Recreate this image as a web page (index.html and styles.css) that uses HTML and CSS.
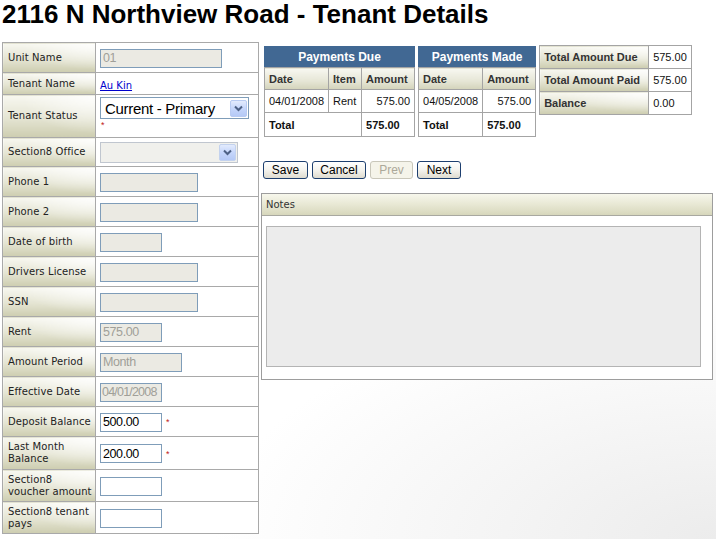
FILE: index.html
```html
<!DOCTYPE html>
<html>
<head>
<meta charset="utf-8">
<title>Tenant Details</title>
<link rel="stylesheet" href="styles.css">
</head>
<body>
<div class="page">
  <h1 class="title">2116 N Northview Road - Tenant Details</h1>
  <div class="main">
    <table class="form">
      <tr class="r30"><td class="lbl">Unit Name</td><td class="val"><input class="inp dis w122" value="01" disabled></td></tr>
      <tr class="r23"><td class="lbl">Tenant Name</td><td class="val"><a class="link" href="#">Au Kin</a></td></tr>
      <tr class="r42"><td class="lbl">Tenant Status</td><td class="val top">
        <span class="sel w148"><select class="sel-in big"><option>Current - Primary</option></select><span class="sel-btn"><svg width="15" height="15" viewBox="0 0 15 15"><path d="M4 5.5 L7.5 9 L11 5.5" fill="none" stroke="#4d6185" stroke-width="2"/></svg></span></span>
        <div class="req req-below">*</div>
      </td></tr>
      <tr class="r29"><td class="lbl">Section8 Office</td><td class="val">
        <span class="sel w137 sel-dis"><select class="sel-in"><option></option></select><span class="sel-btn"><svg width="15" height="15" viewBox="0 0 15 15"><path d="M4 5.5 L7.5 9 L11 5.5" fill="none" stroke="#4d6185" stroke-width="2"/></svg></span></span>
      </td></tr>
      <tr class="r30"><td class="lbl">Phone 1</td><td class="val"><input class="inp dis w98"></td></tr>
      <tr class="r30"><td class="lbl">Phone 2</td><td class="val"><input class="inp dis w98"></td></tr>
      <tr class="r30"><td class="lbl">Date of birth</td><td class="val"><input class="inp dis w62"></td></tr>
      <tr class="r30"><td class="lbl">Drivers License</td><td class="val"><input class="inp dis w98"></td></tr>
      <tr class="r30"><td class="lbl">SSN</td><td class="val"><input class="inp dis w98"></td></tr>
      <tr class="r30"><td class="lbl">Rent</td><td class="val"><input class="inp dis w62" value="575.00" disabled></td></tr>
      <tr class="r30"><td class="lbl">Amount Period</td><td class="val"><input class="inp dis w82" value="Month" disabled></td></tr>
      <tr class="r30"><td class="lbl">Effective Date</td><td class="val"><input class="inp dis w62 tight" value="04/01/2008" disabled></td></tr>
      <tr class="r30"><td class="lbl">Deposit Balance</td><td class="val"><input class="inp w62" value="500.00"><span class="req">*</span></td></tr>
      <tr class="r33"><td class="lbl">Last Month Balance</td><td class="val"><input class="inp w62" value="200.00"><span class="req">*</span></td></tr>
      <tr class="r32"><td class="lbl">Section8 voucher amount</td><td class="val"><input class="inp w62"></td></tr>
      <tr class="r32"><td class="lbl">Section8 tenant pays</td><td class="val"><input class="inp w62"></td></tr>
    </table>

    <div class="side">
      <div class="tables">
        <table class="grid due">
          <tr class="cap"><th colspan="3">Payments Due</th></tr>
          <tr class="head"><td class="c-date">Date</td><td class="c-item">Item</td><td class="c-amt">Amount</td></tr>
          <tr class="data"><td>04/01/2008</td><td>Rent</td><td class="num">575.00</td></tr>
          <tr class="tot"><td colspan="2">Total</td><td>575.00</td></tr>
        </table>
        <table class="grid made">
          <tr class="cap"><th colspan="2">Payments Made</th></tr>
          <tr class="head"><td class="c-date2">Date</td><td class="c-amt2">Amount</td></tr>
          <tr class="data"><td>04/05/2008</td><td class="num">575.00</td></tr>
          <tr class="tot"><td>Total</td><td>575.00</td></tr>
        </table>
        <table class="summary">
          <tr><td class="s-lbl">Total Amount Due</td><td class="s-val">575.00</td></tr>
          <tr><td class="s-lbl">Total Amount Paid</td><td class="s-val">575.00</td></tr>
          <tr><td class="s-lbl">Balance</td><td class="s-val">0.00</td></tr>
        </table>
      </div>

      <div class="buttons">
        <button class="btn b-save">Save</button>
        <button class="btn b-cancel">Cancel</button>
        <button class="btn b-prev" disabled>Prev</button>
        <button class="btn b-next">Next</button>
      </div>

      <div class="notes">
        <div class="notes-head">Notes</div>
        <div class="notes-body"><textarea class="notes-area" disabled></textarea></div>
      </div>
    </div>
  </div>
</div>
</body>
</html>
```

FILE: styles.css
```css
html {
  min-height: 100%;
  background: #fff radial-gradient(ellipse 70% 45% at 100% 100%, #ececec 0%, #ffffff 100%) no-repeat;
}
body {
  margin: 0;
  font-family: "DejaVu Sans", Verdana, sans-serif;
  color: #222;
}
.page {
  padding: 0 2px;
}
.title {
  margin: 0 0 14px;
  font-family: "Liberation Sans", Arial, sans-serif;
  font-weight: bold;
  font-size: 26px;
  line-height: 28px;
  color: #000;
  white-space: nowrap;
}
.main {
  display: flex;
  align-items: flex-start;
}

/* left form table */
.form {
  border-collapse: collapse;
  width: 257px;
  border: 1px solid #a2a2a2;
  flex: none;
}
.form td {
  border: 1px solid #a9a9a9;
  padding: 0;
}
.lbl {
  width: 93px;
  box-sizing: border-box;
  padding: 0 3px 0 5px !important;
  font-size: 10px;
  line-height: 12px;
  letter-spacing: 0.1px;
  color: #222;
  vertical-align: middle;
  background:
    radial-gradient(ellipse 80% 90% at 100% 0%, rgba(255,255,255,0.85), rgba(255,255,255,0) 100%),
    linear-gradient(to bottom, #f7f7f0 0%, #e4e4d2 55%, #cdcdb0 100%);
}
.val {
  padding: 0 0 0 4px !important;
  vertical-align: middle;
  background: #fff;
}
.val.top {
  vertical-align: top;
  padding-top: 2px !important;
}
.r23 td { height: 21px; }
.r29 td { height: 28px; }
.r30 td { height: 29px; }
.r32 td { height: 31px; }
.r33 td { height: 32px; }
.r42 td { height: 40px; }

.inp {
  box-sizing: border-box;
  height: 19px;
  border: 1px solid #7f9db9;
  padding: 0 2px;
  margin: 0;
  font-family: "Liberation Sans", Arial, sans-serif;
  font-size: 12.5px;
  letter-spacing: -0.4px;
  color: #000;
  background: #fff;
  vertical-align: middle;
  outline: none;
}
.inp.dis {
  background: #ebeae3;
  color: #a09f98;
}
.inp.tight {
  padding: 0 0 0 1px;
  letter-spacing: -0.8px;
}
.w122 { width: 122px; }
.w98 { width: 98px; }
.w82 { width: 82px; }
.w62 { width: 62px; }

.req {
  color: #c02020;
  font-family: "Liberation Sans", Arial, sans-serif;
  font-size: 9px;
  margin-left: 4px;
  vertical-align: middle;
}
.req-below {
  margin: 1px 0 0 1px;
  line-height: 10px;
}
.link {
  font-family: "DejaVu Sans", Verdana, sans-serif;
  font-size: 10px;
  color: #0000cc;
  text-decoration: underline;
}

.sel {
  display: inline-flex;
  align-items: center;
  box-sizing: border-box;
  border: 1px solid #7f9db9;
  background: #fff;
  vertical-align: middle;
  padding-right: 1px;
}
.sel.w148 { width: 149px; height: 22px; }
.sel.w137 { width: 138px; height: 21px; }
.sel-dis { background: #f0f0ec; border-color: #c0c6cf; }
.sel-in {
  appearance: none;
  -webkit-appearance: none;
  border: 0;
  background: transparent;
  flex: 1;
  min-width: 0;
  padding: 0 0 0 4px;
  font-family: "Liberation Sans", Arial, sans-serif;
  font-size: 12px;
  color: #000;
  outline: none;
}
.sel-in.big {
  font-size: 15px;
  letter-spacing: -0.3px;
}
.sel-btn {
  box-sizing: border-box;
  width: 17px;
  height: 17px;
  display: flex;
  align-items: center;
  justify-content: center;
  border: 1px solid #b8cbf2;
  border-radius: 2px;
  background: linear-gradient(to bottom, #e3ebfd 0%, #c5d6fb 50%, #b5c9f6 100%);
}
.sel-dis .sel-btn {
  border-color: #c3d2ee;
}

/* right side */
.side {
  margin-left: 2px;
  width: 452px;
  display: flex;
  flex-direction: column;
}
.tables {
  display: flex;
  align-items: flex-start;
  gap: 3px;
  padding: 3px 0 0 3px;
}
.grid, .summary {
  border-collapse: collapse;
  font-family: "Liberation Sans", Arial, sans-serif;
  font-size: 11px;
  color: #111;
}
.grid {
  margin-top: 1px;
  border: 1px solid #a4a4a4;
}
.grid td, .grid th {
  border: 1px solid #a4a4a4;
  padding: 0 4px;
  white-space: nowrap;
}
.grid .cap th {
  height: 20px;
  background: #416893;
  color: #fff;
  font-size: 12px;
  font-weight: bold;
  text-align: center;
  border-color: #416893;
  border-bottom-color: #a4a4a4;
}
.grid .head td {
  height: 21px;
  font-weight: bold;
  color: #333;
  background: linear-gradient(to bottom, #f8f8f1 0%, #e6e6d6 60%, #d3d3ba 100%);
}
.grid .data td { height: 22px; }
.grid .tot td { height: 23px; font-weight: bold; }
.grid .num { text-align: right; padding-right: 4px; }
.due .c-date { width: 55px; }
.due .c-item { width: 24px; }
.due .c-amt { width: 44px; }
.made .c-date2 { width: 54px; }
.made .c-amt2 { width: 44px; }

.summary {
  border: 1px solid #a4a4a4;
}
.summary td {
  border: 1px solid #a4a4a4;
  height: 22px;
  padding: 0 4px;
  white-space: nowrap;
}
.s-lbl {
  width: 100px;
  font-weight: bold;
  color: #333;
  background:
    radial-gradient(ellipse 80% 90% at 100% 0%, rgba(255,255,255,0.85), rgba(255,255,255,0) 100%),
    linear-gradient(to bottom, #f7f7f0 0%, #e4e4d2 55%, #cdcdb0 100%);
}
.s-val {
  width: 34px;
  background: #fff;
}

.buttons {
  display: flex;
  gap: 4px;
  margin: 24px 0 0 2px;
}
.btn {
  box-sizing: border-box;
  height: 18px;
  padding: 0;
  font-family: "Liberation Sans", Arial, sans-serif;
  font-size: 12px;
  line-height: 14px;
  color: #000;
  border: 1px solid #1d3f6f;
  border-radius: 3px;
  background: linear-gradient(to bottom, #ffffff 0%, #f4f3ee 50%, #dedbcf 100%);
}
.b-save { width: 45px; }
.b-cancel { width: 54px; }
.b-prev { width: 43px; color: #aca899; border-color: #c9c7ba; background: #f5f4ea; }
.b-next { width: 44px; }

.notes {
  margin-top: 14px;
  width: 452px;
  box-sizing: border-box;
  border: 1px solid #9d9d9d;
  background: #fff;
}
.notes-head {
  height: 21px;
  line-height: 22px;
  padding-left: 4px;
  font-size: 10px;
  color: #333;
  border-bottom: 1px solid #a8a8a0;
  background: linear-gradient(to bottom, #f7f7ec 0%, #e8e8d4 50%, #d7d7bc 100%);
}
.notes-body {
  padding: 10px 0 12px 4px;
}
.notes-area {
  display: block;
  box-sizing: border-box;
  width: 435px;
  height: 141px;
  margin: 0;
  border: 1px solid #b4b4b4;
  background: #ececec;
  resize: none;
}
```
